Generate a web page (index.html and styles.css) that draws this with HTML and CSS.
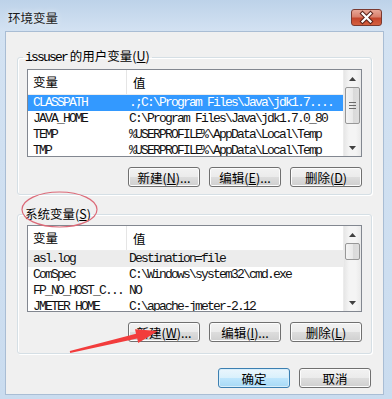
FILE: index.html
```html
<!DOCTYPE html>
<html>
  <head>
    <title>环境变量</title>
    <link rel="stylesheet" href="styles.css">
  </head>
  <body>
    <div class="window">
      <div class="titlebar">
        <span class="title">环境变量</span>
        <button class="close">
          <svg width="31" height="17" viewBox="0 0 31 17">
            <path d="M11.5 4.5 L19.5 12.5 M19.5 4.5 L11.5 12.5" stroke="#5a2219" stroke-width="4.2" stroke-linecap="square"/>
            <path d="M11.5 4.5 L19.5 12.5 M19.5 4.5 L11.5 12.5" stroke="#ffffff" stroke-width="2.2" stroke-linecap="square"/>
          </svg>
        </button>
      </div>

      <div class="client">
        <!-- user variables -->
        <fieldset class="group">
          <legend><span class="mono">issuser</span> 的用户变量(<u>U</u>)</legend>
          <div class="list list-user">
            <div class="grid">
              <div class="head"><span class="col-name">变量</span><span class="col-value">值</span></div>
              <div class="row selected"><span class="col-name">CLASSPATH</span><span class="col-value">.;C:\Program Files\Java\jdk1.7....</span></div>
              <div class="row"><span class="col-name">JAVA_HOME</span><span class="col-value">C:\Program Files\Java\jdk1.7.0_80</span></div>
              <div class="row"><span class="col-name">TEMP</span><span class="col-value">%USERPROFILE%\AppData\Local\Temp</span></div>
              <div class="row"><span class="col-name">TMP</span><span class="col-value">%USERPROFILE%\AppData\Local\Temp</span></div>
            </div>
            <div class="scrollbar">
              <div class="sb-btn"><svg width="7" height="4"><polygon points="0,4 3.5,0 7,4" fill="#404040"/></svg></div>
              <div class="sb-thumb thumb-user"><span class="grip"></span></div>
              <div class="sb-track"></div>
              <div class="sb-btn"><svg width="7" height="4"><polygon points="0,0 3.5,4 7,0" fill="#404040"/></svg></div>
            </div>
          </div>
          <div class="actions">
            <button class="btn">新建(<u>N</u>)...</button>
            <button class="btn">编辑(<u>E</u>)...</button>
            <button class="btn">删除(<u>D</u>)</button>
          </div>
        </fieldset>

        <!-- system variables -->
        <fieldset class="group group-system">
          <legend>系统变量(<u>S</u>)</legend>
          <div class="list list-system">
            <div class="grid">
              <div class="head"><span class="col-name">变量</span><span class="col-value">值</span></div>
              <div class="row inactive"><span class="col-name">asl.log</span><span class="col-value">Destination=file</span></div>
              <div class="row"><span class="col-name">ComSpec</span><span class="col-value">C:\Windows\system32\cmd.exe</span></div>
              <div class="row"><span class="col-name">FP_NO_HOST_C...</span><span class="col-value">NO</span></div>
              <div class="row"><span class="col-name">JMETER_HOME</span><span class="col-value">C:\apache-jmeter-2.12</span></div>
            </div>
            <div class="scrollbar">
              <div class="sb-btn"><svg width="7" height="4"><polygon points="0,4 3.5,0 7,4" fill="#404040"/></svg></div>
              <div class="sb-thumb thumb-system"></div>
              <div class="sb-track"></div>
              <div class="sb-btn"><svg width="7" height="4"><polygon points="0,0 3.5,4 7,0" fill="#404040"/></svg></div>
            </div>
          </div>
          <div class="actions">
            <button class="btn">新建(<u>W</u>)...</button>
            <button class="btn">编辑(<u>I</u>)...</button>
            <button class="btn">删除(<u>L</u>)</button>
          </div>
        </fieldset>

        <div class="footer">
          <button class="btn btn-default">确定</button>
          <button class="btn">取消</button>
        </div>
      </div>

      <!-- red annotations drawn over the dialog -->
      <svg class="marks" width="392" height="399" viewBox="0 0 392 399">
        <ellipse cx="59.5" cy="209.5" rx="37.5" ry="17.5" fill="none" stroke="#dc6a78" stroke-width="1.2"/>
        <polygon points="69.8,351 136,333.8 135,329.3 158,331 138.2,342.9 137.2,338.4 70.2,353" fill="#f23c3c"/>
      </svg>
    </div>
  </body>
</html>
```

FILE: styles.css
```css
body {
  margin: 0;
  padding: 0;
  background-color: #ffffff;
}

.window {
  position: relative;
  width: 392px;
  height: 399px;
  display: flex;
  flex-direction: column;
  background: linear-gradient(to bottom, #bdd2e9 0px, #d3e2f2 31px, #cadcef 100%);
  font-family: "Noto Sans CJK SC", "Liberation Sans", sans-serif;
  font-size: 12px;
  color: #000;
}

.titlebar {
  height: 31px;
  box-sizing: border-box;
  padding: 3px 10px 0 8px;
  display: flex;
  align-items: center;
  justify-content: space-between;
}

.title {
  font-size: 12.5px;
  color: #1a1a1a;
  text-shadow: 0 0 6px rgba(255, 255, 255, 0.9);
}

.close {
  width: 31px;
  height: 17px;
  padding: 0;
  border: 1px solid #7a3a30;
  border-radius: 3px;
  background: linear-gradient(to bottom, #e8a797 0%, #d9806c 45%, #c4452c 55%, #d4603f 100%);
  display: flex;
  align-items: center;
  justify-content: center;
  box-sizing: border-box;
}

.close svg {
  display: block;
  margin: -1px;
}

.client {
  flex: 1;
  margin: 0 8px 4px 5px;
  padding: 16px 11px 0 11px;
  background-color: #f0f0f0;
  border: 1px solid #a9bdd4;
  display: flex;
  flex-direction: column;
}

.group {
  margin: 0;
  min-width: 0;
  padding: 3px 9px 7px 9px;
  border: 1px solid #d5dfe5;
  border-radius: 3px;
  box-shadow: inset 1px 1px 0 #ffffff, 1px 1px 0 #ffffff;
}

.group-system {
  margin-top: 11px;
  padding-bottom: 11px;
}

.group legend {
  padding: 0 2px;
  margin-left: -4px;
  line-height: 16px;
  font-size: 12.5px;
}

.mono {
  font-family: "Liberation Mono", monospace;
  font-size: 13px;
  letter-spacing: -1.8px;
}

.list {
  display: flex;
  box-sizing: border-box;
  border: 1px solid #828790;
  background-color: #ffffff;
}

.list-user {
  height: 88px;
}

.list-system {
  height: 87px;
}

.grid {
  flex: 1;
  min-width: 0;
  overflow: hidden;
}

.head {
  height: 24px;
  display: flex;
  align-items: center;
  border-bottom: 1px solid #ededed;
  font-size: 12.5px;
}

.col-name {
  flex: none;
  width: 99px;
  box-sizing: border-box;
  padding-left: 5px;
  overflow: hidden;
}

.col-value {
  flex: 1;
  min-width: 0;
  overflow: hidden;
  padding-left: 2px;
}

.head .col-name {
  border-right: 1px solid #e5e5e5;
  line-height: 24px;
}

.head .col-value {
  padding-left: 6px;
}

.row {
  display: flex;
  height: 16px;
  line-height: 16px;
  font-family: "Liberation Mono", monospace;
  font-size: 13px;
  letter-spacing: -1.8px;
  white-space: nowrap;
  color: #111;
}

.row.selected {
  background-color: #3399ff;
  color: #ffffff;
}

.row.inactive {
  background-color: #ececec;
}

.scrollbar {
  flex: none;
  width: 17px;
  display: flex;
  flex-direction: column;
  background: linear-gradient(to right, #e6e6e6, #f4f4f4 30%, #f4f4f4 70%, #e9e9e9);
  border-left: 1px solid #ececec;
}

.sb-btn {
  height: 17px;
  display: flex;
  align-items: center;
  justify-content: center;
}

.sb-btn svg {
  display: block;
}

.sb-thumb {
  margin: 0 1px;
  border: 1px solid #979797;
  border-radius: 2px;
  background: linear-gradient(to right, #f4f4f4, #e9e9e9 50%, #d9d9d9 51%, #dedede);
  display: flex;
  align-items: center;
  justify-content: center;
}

.thumb-user {
  height: 35px;
}

.thumb-system {
  height: 15px;
}

.grip {
  width: 7px;
  height: 7px;
  background: repeating-linear-gradient(to bottom, #6a6a6a 0px, #6a6a6a 1px, transparent 1px, transparent 3px);
}

.sb-track {
  flex: 1;
}

.actions {
  margin-top: 10px;
  display: flex;
  justify-content: flex-end;
  gap: 9px;
}

.btn {
  width: 72px;
  height: 20px;
  padding: 0;
  box-sizing: border-box;
  border: 1px solid #707070;
  border-radius: 3px;
  background: linear-gradient(to bottom, #f2f2f2 0%, #ebebeb 50%, #dddddd 51%, #cfcfcf 100%);
  box-shadow: inset 0 0 0 1px #fcfcfc;
  font-family: "Noto Sans CJK SC", "Liberation Sans", sans-serif;
  font-size: 12.5px;
  line-height: 17px;
  color: #000;
}

.btn-default {
  border-color: #3c7fb1;
  background: linear-gradient(to bottom, #eaf6fd 0%, #d9f0fc 50%, #bee6fd 51%, #a7d9f5 100%);
  box-shadow: inset 0 0 0 1px #d7eefb;
}

.footer {
  margin-top: 14px;
  padding-right: 1px;
  display: flex;
  justify-content: flex-end;
  gap: 9px;
}

.marks {
  position: absolute;
  left: 0;
  top: 0;
  pointer-events: none;
}
```
